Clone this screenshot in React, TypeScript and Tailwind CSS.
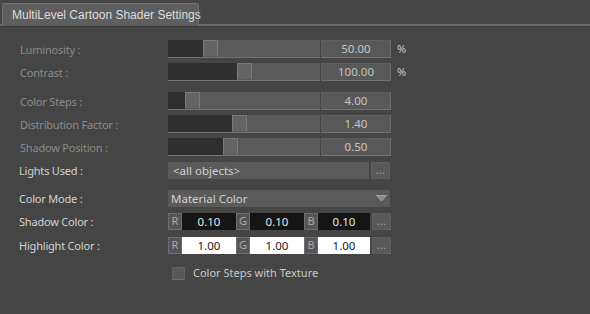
import React from "react";

const font = { fontFamily: '"Noto Sans", "Open Sans", sans-serif' };

function SliderRow({ label, fill, value, pct, mt }: { label: string; fill: number; value: string; pct?: boolean; mt: string }) {
  return (
    <div className={`flex items-center h-[18px] ${mt}`}>
      <div className="w-[168px] pl-[20px] text-[11px] text-[#8c8c8c] leading-none tracking-[-0.2px]">{label}</div>
      <div className="relative w-[152px] h-[18px] bg-[#5a5a5a] border-b border-[#727272] flex">
        <div className="h-full bg-[#2f2f2f]" style={{ width: fill }} />
        <div className="h-[17px] w-[15px] bg-[#646464] border border-[#7a7a7a] border-b-[#595959]" />
      </div>
      <div className="ml-[1px] w-[70px] h-[18px] bg-[#585858] border-t border-l border-[#5f5f5f] border-r border-r-[#6e6e6e] border-b border-b-[#727272] flex items-center justify-center text-[11.5px] text-[#c6c6c6]">
        {value}
      </div>
      {pct && <div className="ml-[6px] text-[11px] text-[#c8c8c8]">%</div>}
    </div>
  );
}

function Dots() {
  return (
    <div className="ml-[2px] w-[19px] h-full bg-[#585858] border border-[#5f5f5f] flex items-end justify-center pb-[3px] text-[10px] text-[#b0b0b0] leading-none tracking-[0.5px]">
      ...
    </div>
  );
}

function ColorRow({ label, dark, mt }: { label: string; dark: boolean; mt: string }) {
  const field = dark ? "bg-[#151515] text-[#e6e6e6]" : "bg-white text-[#1a1a1a]";
  const box = "w-[14px] h-full bg-[#555] border border-[#6e6e6e] flex items-center justify-center text-[11px] text-[#a8a8a8]";
  return (
    <div className={`flex items-center h-[17px] ${mt}`}>
      <div className="w-[168px] pl-[19px] text-[11px] text-[#d2d2d2] leading-none tracking-[-0.2px]">{label}</div>
      <div className="flex h-[17px] w-[202px]">
        <div className={box}>R</div>
        <div className={`w-[54px] h-full ${field} flex items-center justify-center text-[11.5px]`}>{dark ? "0.10" : "1.00"}</div>
        <div className={box}>G</div>
        <div className={`w-[54px] h-full ${field} flex items-center justify-center text-[11.5px]`}>{dark ? "0.10" : "1.00"}</div>
        <div className={box}>B</div>
        <div className={`w-[52px] h-full ${field} flex items-center justify-center text-[11.5px]`}>{dark ? "0.10" : "1.00"}</div>
      </div>
      <div className="h-[17px] flex">
        <Dots />
      </div>
    </div>
  );
}

export default function App() {
  return (
    <div className="w-[590px] h-[314px] bg-[#444544] overflow-hidden" style={font}>
      <div className="relative h-[27px]">
        <div className="absolute left-0 right-0 top-[24px] h-[2px] bg-[#6a6a6a]" />
        <div className="absolute left-0 right-0 top-[26px] h-[1px] bg-[#3c3c3c]" />
        <div
          className="absolute left-[2px] top-[3px] w-[197px] h-[23px] bg-[#5e5e5e] border border-[#727272] border-b-0 rounded-t-[3px] flex items-center pl-[9px] text-[12px] text-[#dcdcdc] whitespace-nowrap"
          style={{ fontFamily: '"Liberation Sans", Arial, sans-serif' }}
        >
          MultiLevel Cartoon Shader Settings
        </div>
      </div>
      <SliderRow label="Luminosity :" fill={35} value="50.00" pct mt="mt-[13px]" />
      <SliderRow label="Contrast :" fill={69} value="100.00" pct mt="mt-[5px]" />
      <SliderRow label="Color Steps :" fill={17} value="4.00" mt="mt-[11px]" />
      <SliderRow label="Distribution Factor :" fill={64} value="1.40" mt="mt-[5px]" />
      <SliderRow label="Shadow Position :" fill={55} value="0.50" mt="mt-[5px]" />
      <div className="flex items-center h-[17px] mt-[6px]">
        <div className="w-[168px] pl-[19px] text-[11px] text-[#d2d2d2] leading-none tracking-[-0.2px]">Lights Used :</div>
        <div className="w-[201px] h-full bg-[#5a5a5a] flex items-center pl-[5px] text-[11.5px] text-[#d0d0d0]">&lt;all objects&gt;</div>
        <div className="h-full flex">
          <Dots />
        </div>
      </div>
      <div className="flex items-center h-[17px] mt-[11px]">
        <div className="w-[168px] pl-[19px] text-[11px] text-[#d2d2d2] leading-none tracking-[-0.2px]">Color Mode :</div>
        <div className="w-[222px] h-full bg-[#5a5a5a] flex items-center justify-between pl-[3px] pr-[3px] text-[11.5px] text-[#d0d0d0]">
          <span>Material Color</span>
          <svg width="11" height="7" viewBox="0 0 11 7">
            <path d="M0.5 0.5 L10.5 0.5 L5.5 6 Z" fill="#8a8a8a" stroke="#b0b0b0" strokeWidth="0.8" />
          </svg>
        </div>
      </div>
      <ColorRow label="Shadow Color :" dark mt="mt-[6px]" />
      <ColorRow label="Highlight Color :" dark={false} mt="mt-[7px]" />
      <div className="flex items-center h-[14px] mt-[12px] pl-[172px]">
        <div className="w-[13px] h-[13px] bg-[#585858] border border-[#626262] border-b-[#6e6e6e]" />
        <span className="ml-[8px] text-[11px] text-[#c8c8c8]">Color Steps with Texture</span>
      </div>
    </div>
  );
}
